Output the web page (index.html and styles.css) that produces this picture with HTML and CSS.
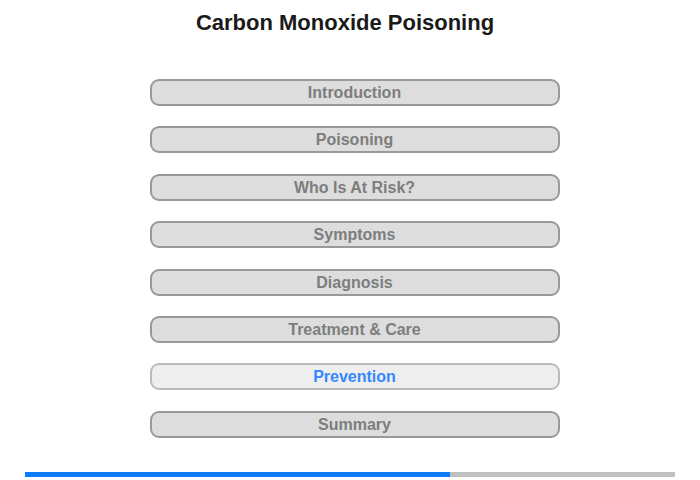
FILE: index.html
```html
<!DOCTYPE html>
<html lang="en">
<head>
    <meta charset="UTF-8">
    <title>Carbon Monoxide Poisoning</title>
    <link rel="stylesheet" href="styles.css">
</head>
<body>
    <h1 class="title">Carbon Monoxide Poisoning</h1>
    <div class="menu">
        <button type="button" class="menu-item">Introduction</button>
        <button type="button" class="menu-item">Poisoning</button>
        <button type="button" class="menu-item">Who Is At Risk?</button>
        <button type="button" class="menu-item">Symptoms</button>
        <button type="button" class="menu-item">Diagnosis</button>
        <button type="button" class="menu-item">Treatment &amp; Care</button>
        <button type="button" class="menu-item current">Prevention</button>
        <button type="button" class="menu-item">Summary</button>
    </div>
    <div class="progress">
        <div class="progress-fill" style="width: 65.4%;"></div>
    </div>
</body>
</html>
```

FILE: styles.css
```css
body {
    margin: 0;
    font-family: "Liberation Sans", Arial, sans-serif;
    background: #fff;
}

.title {
    margin: 0;
    padding: 10px 10px 0 0;
    height: 68px;
    box-sizing: border-box;
    text-align: center;
    font-size: 22px;
    line-height: 26px;
    color: #1a1a1a;
}

.menu {
    display: flex;
    flex-direction: column;
    align-items: center;
    gap: 20.4px;
    padding: 11px 0 0 9px;
}

.menu-item {
    width: 410px;
    height: 27px;
    padding: 0;
    border: 2px solid #999;
    border-radius: 9px;
    background: #ddd;
    color: #7d7d7d;
    font-family: "Liberation Sans", Arial, sans-serif;
    font-weight: bold;
    font-size: 16px;
    line-height: 23px;
    cursor: pointer;
}

.menu-item.current {
    background: #eee;
    border-color: #bbb;
    color: #3388ff;
}

.progress {
    margin: 34px 25px 0;
    height: 5px;
    background: #c0c0c0;
}

.progress-fill {
    height: 100%;
    background: #0a7cff;
}
```
